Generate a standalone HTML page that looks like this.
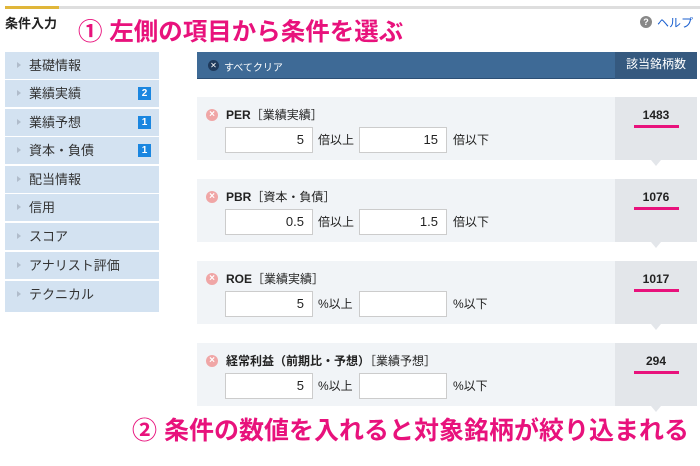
<!DOCTYPE html>
<html><head><meta charset="utf-8"><style>
*{margin:0;padding:0;box-sizing:border-box}
body{width:700px;height:466px;background:#fff;position:relative;overflow:hidden;font-family:"Liberation Sans","Noto Sans CJK JP",sans-serif;color:#222}
.a{position:absolute}
.side div{position:absolute;left:5px;width:154px;height:27px;background:#d3e2f1;font-size:13px;line-height:27px;padding-left:24px;color:#333}
.side div:before{content:"";position:absolute;left:12px;top:10px;border-left:4px solid #b0bccb;border-top:3.5px solid transparent;border-bottom:3.5px solid transparent}
.badge{position:absolute;right:8px;top:7px;width:13px;height:13px;background:#1a86e0;color:#fff;font-size:10px;font-weight:bold;line-height:13px;text-align:center;padding:0!important}
.badge:before{display:none}
.card{position:absolute;left:197px;width:500px;height:63px;background:#f1f4f7}
.cnt{position:absolute;right:0;top:0;width:82px;height:63px;background:#e3e6ea;text-align:center;font-size:12px;font-weight:bold;padding-top:11px}
.cnt:after{content:"";position:absolute;left:36px;bottom:-6px;border-top:6px solid #e3e6ea;border-left:5px solid transparent;border-right:5px solid transparent}
.ul{position:absolute;left:19px;top:28px;width:45px;height:3px;background:#e8127c}
.x{position:absolute;left:9px;top:12px;width:12px;height:12px;border-radius:50%;background:#f0a6a6;color:#fff;font-size:10px;line-height:12px;text-align:center;font-weight:bold}
.t{position:absolute;left:29px;top:9px;font-size:12px;font-weight:bold}
.t span{font-weight:normal}
.in{position:absolute;top:30px;width:88px;height:26px;background:#fff;border:1px solid #ccc;text-align:right;padding-right:8px;font-size:13px;line-height:24px}
.lb{position:absolute;top:30px;font-size:12px;line-height:26px}
.pink{color:#e8127c;position:absolute;white-space:nowrap;font-weight:bold}
</style></head><body>
<div class="a" style="left:5px;top:6px;width:695px;height:3px;background:#dedede"></div>
<div class="a" style="left:5px;top:6px;width:54px;height:3px;background:#e0b63a"></div>
<div class="a" style="left:5px;top:13px;font-size:13px;font-weight:bold">条件入力</div>
<div class="pink" style="left:78px;top:13px;font-size:24.5px">① 左側の項目から条件を選ぶ</div>
<div class="a" style="left:640px;top:16px;width:12px;height:12px;border-radius:50%;background:#888;color:#fff;font-size:9px;font-weight:bold;text-align:center;line-height:12px">?</div>
<div class="a" style="left:657px;top:14px;font-size:12px;color:#1a5fcf">ヘルプ</div>
<div class="side">
<div style="top:52px">基礎情報</div>
<div style="top:80px">業績実績<span class="badge">2</span></div>
<div style="top:109px">業績予想<span class="badge">1</span></div>
<div style="top:137px">資本・負債<span class="badge">1</span></div>
<div style="top:166px">配当情報</div>
<div style="top:194px">信用</div>
<div style="top:223px">スコア</div>
<div style="top:252px">アナリスト評価</div>
<div style="top:281px;height:31px">テクニカル</div>
</div>
<div class="a" style="left:197px;top:52px;width:500px;height:27px;background:#3e6a96;border-bottom:1px solid #2c4f75"></div>
<div class="a" style="left:208px;top:60px;width:11px;height:11px;border-radius:50%;background:#1f3a5c;color:#fff;font-size:8px;text-align:center;line-height:11px">✕</div>
<div class="a" style="left:224px;top:59px;font-size:10px;color:#fff">すべてクリア</div>
<div class="a" style="left:615px;top:52px;width:82px;height:27px;background:#35597f;color:#fff;font-size:12px;text-align:center;line-height:25px">該当銘柄数</div>

<div class="card" style="top:97px"><div class="x">×</div><div class="t">PER<span>［業績実績］</span></div>
<div class="in" style="left:28px">5</div><div class="lb" style="left:121px">倍以上</div><div class="in" style="left:162px">15</div><div class="lb" style="left:256px">倍以下</div>
<div class="cnt">1483<div class="ul"></div></div></div>
<div class="card" style="top:179px"><div class="x">×</div><div class="t">PBR<span>［資本・負債］</span></div>
<div class="in" style="left:28px">0.5</div><div class="lb" style="left:121px">倍以上</div><div class="in" style="left:162px">1.5</div><div class="lb" style="left:256px">倍以下</div>
<div class="cnt">1076<div class="ul"></div></div></div>
<div class="card" style="top:261px"><div class="x">×</div><div class="t">ROE<span>［業績実績］</span></div>
<div class="in" style="left:28px">5</div><div class="lb" style="left:121px">%以上</div><div class="in" style="left:162px"></div><div class="lb" style="left:256px">%以下</div>
<div class="cnt">1017<div class="ul"></div></div></div>
<div class="card" style="top:343px"><div class="x">×</div><div class="t">経常利益（前期比・予想）<span>［業績予想］</span></div>
<div class="in" style="left:28px">5</div><div class="lb" style="left:121px">%以上</div><div class="in" style="left:162px"></div><div class="lb" style="left:256px">%以下</div>
<div class="cnt">294<div class="ul"></div></div></div>
<div class="pink" style="left:132px;top:411px;font-size:25px">② 条件の数値を入れると対象銘柄が絞り込まれる</div>
</body></html>
